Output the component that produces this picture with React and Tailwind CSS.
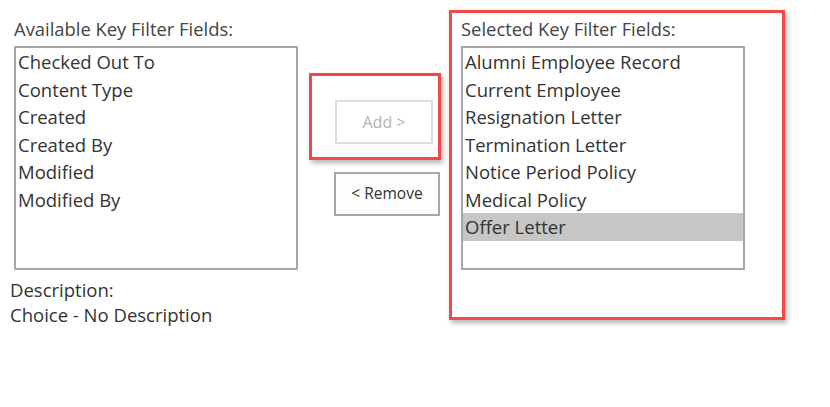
const available = ["Checked Out To", "Content Type", "Created", "Created By", "Modified", "Modified By"]
const selected = [
    "Alumni Employee Record",
    "Current Employee",
    "Resignation Letter",
    "Termination Letter",
    "Notice Period Policy",
    "Medical Policy",
    "Offer Letter",
]

const ListBox = ({ items, active }) => (
    <div className="border-2 border-[#a6a6a6] bg-white w-[284px] h-[224px] overflow-hidden">
        {items.map((item) => (
            <div
                key={item}
                className={`h-[27.5px] leading-[27.5px] px-[2px] text-[18.5px] text-[#333] whitespace-nowrap ${item === active ? "bg-[#c6c6c6]" : ""}`}
            >
                {item}
            </div>
        ))}
    </div>
)

const App = () => {
    return (
        <div className="w-[830px] h-[407px] bg-white flex items-start font-['Open_Sans',sans-serif] text-[#333]">
            <div className="ml-[14px] mt-[18px] flex flex-col">
                <label className="h-[28px] leading-[22px] text-[18.4px] text-[#444]">Available Key Filter Fields:</label>
                <ListBox items={available} />
                <div className="-ml-[4px] mt-[7px] text-[18.5px] leading-[25px] text-[#333]">
                    <div>Description:</div>
                    <div>Choice - No Description</div>
                </div>
            </div>

            <div className="ml-[11px] mt-[73px] flex flex-col">
                <div className="w-[132px] h-[87px] border-[3px] border-[#f44848] shadow-[2px_3px_5px_rgba(0,0,0,0.3)] pl-[23px] pt-[24px]">
                    <button className="w-[98px] h-[44px] border-2 border-[#dedede] bg-white text-[16px] text-[#b3b3b3]">
                        Add &gt;
                    </button>
                </div>
                <button className="ml-[25px] mt-[12px] w-[106px] h-[44px] border-2 border-[#a6a6a6] bg-[#fdfdfd] text-[15.5px] text-[#333]">
                    &lt; Remove
                </button>
            </div>

            <div className="ml-[8px] mt-[10px] w-[336px] h-[310px] border-[3px] border-[#f44848] shadow-[2px_3px_5px_rgba(0,0,0,0.3)] pl-[9px] pt-[5px]">
                <label className="block h-[28px] leading-[22px] text-[18.4px] text-[#444]">Selected Key Filter Fields:</label>
                <ListBox items={selected} active="Offer Letter" />
            </div>
        </div>
    )
}
export default App
